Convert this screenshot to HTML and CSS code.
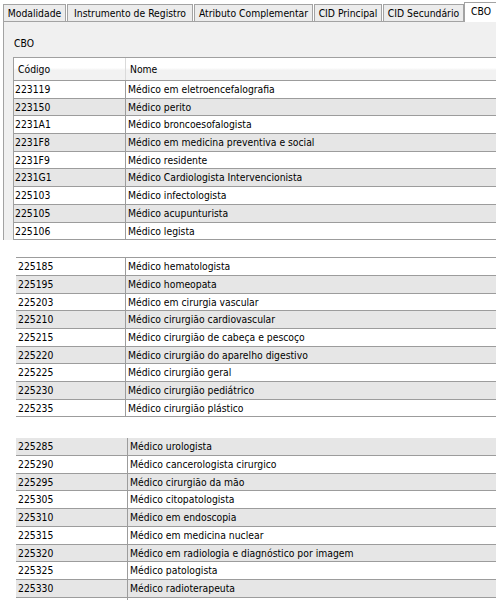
FILE: index.html
```html
<!DOCTYPE html>
<html>
<head>
	<title>CBO</title>
	<link rel="stylesheet" href="styles.css">
</head>
<body>
<div class="tabs">
	<span class="tab tab-mod">Modalidade</span>
	<span class="tab tab-inst">Instrumento de Registro</span>
	<span class="tab tab-atr">Atributo Complementar</span>
	<span class="tab tab-cidp">CID Principal</span>
	<span class="tab tab-cids">CID Secundário</span>
	<span class="tab tab-cbo on">CBO</span>
</div>
<div class="panel">
	<p class="caption">CBO</p>
	<div class="grid g1">
		<div class="g-head"><span class="cod">Código</span><span class="nome">Nome</span></div>
		<div class="g-row"><span class="cod">223119</span><span class="nome">Médico em eletroencefalografia</span></div>
		<div class="g-row alt"><span class="cod">223150</span><span class="nome">Médico perito</span></div>
		<div class="g-row"><span class="cod">2231A1</span><span class="nome">Médico broncoesofalogista</span></div>
		<div class="g-row alt"><span class="cod">2231F8</span><span class="nome">Médico em medicina preventiva e social</span></div>
		<div class="g-row"><span class="cod">2231F9</span><span class="nome">Médico residente</span></div>
		<div class="g-row alt"><span class="cod">2231G1</span><span class="nome">Médico Cardiologista Intervencionista</span></div>
		<div class="g-row"><span class="cod">225103</span><span class="nome">Médico infectologista</span></div>
		<div class="g-row alt"><span class="cod">225105</span><span class="nome">Médico acupunturista</span></div>
		<div class="g-row"><span class="cod">225106</span><span class="nome">Médico legista</span></div>
	</div>
</div>

<div class="grid g2">
	<div class="g-row"><span class="cod">225185</span><span class="nome">Médico hematologista</span></div>
	<div class="g-row alt"><span class="cod">225195</span><span class="nome">Médico homeopata</span></div>
	<div class="g-row"><span class="cod">225203</span><span class="nome">Médico em cirurgia vascular</span></div>
	<div class="g-row alt"><span class="cod">225210</span><span class="nome">Médico cirurgião cardiovascular</span></div>
	<div class="g-row"><span class="cod">225215</span><span class="nome">Médico cirurgião de cabeça e pescoço</span></div>
	<div class="g-row alt"><span class="cod">225220</span><span class="nome">Médico cirurgião do aparelho digestivo</span></div>
	<div class="g-row"><span class="cod">225225</span><span class="nome">Médico cirurgião geral</span></div>
	<div class="g-row alt"><span class="cod">225230</span><span class="nome">Médico cirurgião pediátrico</span></div>
	<div class="g-row"><span class="cod">225235</span><span class="nome">Médico cirurgião plástico</span></div>
</div>

<div class="grid g3">
	<div class="g-row alt"><span class="cod">225285</span><span class="nome">Médico urologista</span></div>
	<div class="g-row"><span class="cod">225290</span><span class="nome">Médico cancerologista cirurgico</span></div>
	<div class="g-row alt"><span class="cod">225295</span><span class="nome">Médico cirurgião da mão</span></div>
	<div class="g-row"><span class="cod">225305</span><span class="nome">Médico citopatologista</span></div>
	<div class="g-row alt"><span class="cod">225310</span><span class="nome">Médico em endoscopia</span></div>
	<div class="g-row"><span class="cod">225315</span><span class="nome">Médico em medicina nuclear</span></div>
	<div class="g-row alt"><span class="cod">225320</span><span class="nome">Médico em radiologia e diagnóstico por imagem</span></div>
	<div class="g-row"><span class="cod">225325</span><span class="nome">Médico patologista</span></div>
	<div class="g-row alt"><span class="cod">225330</span><span class="nome">Médico radioterapeuta</span></div>
	<div class="g-row"><span class="cod"></span><span class="nome"></span></div>
</div>
</body>
</html>
```

FILE: styles.css
```css
body{
	margin: 0;
	width: 496px;
	height: 600px;
	overflow: hidden;
	background-color: #fff;
	color: #000;
	font-family: "DejaVu Sans Condensed", "DejaVu Sans", sans-serif;
	font-stretch: condensed;
	font-size: 10.3px;
}
.tabs{
	display: flex;
	align-items: flex-end;
	height: 21px;
	padding-left: 3px;
	white-space: nowrap;
}
.tab{
	box-sizing: border-box;
	height: 17px;
	line-height: 17px;
	margin-right: 1px;
	text-align: center;
	background-color: #ececec;
	border: 1px solid #a3a3a3;
	border-bottom: none;
	flex-shrink: 0;
}
.tab-mod{ width: 63px; }
.tab-inst{ width: 126px; }
.tab-atr{ width: 119px; }
.tab-cidp{ width: 68px; }
.tab-cids{ width: 81px; }
.tab-cbo{ width: 40px; }
.tab.on{
	position: relative;
	height: 20px;
	line-height: 17px;
	margin-bottom: -1px;
	margin-left: -1px;
	text-align: left;
	padding-left: 6px;
	background-color: #fff;
}
.panel{
	margin-left: 3px;
	padding-left: 9px;
	background-color: #f0f0f0;
	border-top: 1px solid #a3a3a3;
	border-left: 1px solid #a3a3a3;
}
.caption{
	margin: 0;
	padding: 14px 0 7px 1px;
	line-height: 14px;
}
.grid{
	background-color: #fff;
	white-space: nowrap;
}
.g-head,
.g-row{
	display: flex;
	box-sizing: border-box;
	border-bottom: 1px solid #9c9c9c;
}
.g-head{
	height: 23px;
	line-height: 22px;
	background: linear-gradient(#fff, #fff 45%, #f2f2f2 55%, #f2f2f2);
}
.g-head .cod{
	padding-left: 4px;
	border-right: 1px solid #dadada;
}
.g-head .nome{
	padding-left: 4px;
}
.g-row{
	height: 17.7px;
	line-height: 16.7px;
}
.g-row.alt{
	background-color: #e6e6e6;
}
.cod{
	box-sizing: border-box;
	flex-shrink: 0;
	padding-left: 2px;
	border-right: 1px solid #9c9c9c;
}
.nome{
	padding-left: 2px;
}
.g1{
	border-top: 1px solid #a0a0a0;
	border-left: 1px solid #a0a0a0;
}
.g1 .cod{
	width: 112px;
	padding-left: 1px;
}
.g1 .g-head .cod{
	padding-left: 4px;
}
.g2{
	margin: 17px 0 0 16px;
	border-top: 1px solid #9c9c9c;
}
.g2 .cod{
	width: 110px;
}
.g3{
	margin: 21px 0 0 16px;
}
.g3 .cod{
	width: 112px;
}
```
